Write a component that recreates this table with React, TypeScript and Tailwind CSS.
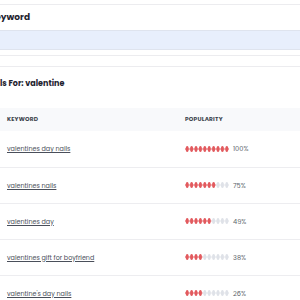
import React from "react";

type Row = { keyword: string; pct: number; fill: number };

const rows: Row[] = [
  { keyword: "valentines day nails", pct: 100, fill: 10 },
  { keyword: "valentines nails", pct: 75, fill: 7.5 },
  { keyword: "valentines day", pct: 49, fill: 6 },
  { keyword: "valentines gift for boyfriend", pct: 38, fill: 4 },
  { keyword: "valentine's day nails", pct: 26, fill: 4 },
];

// popularity meter: 10 little pips threaded on a line
const Meter = ({ fill }: { fill: number }) => {
  const step = 4.4;
  return (
    <svg width="45" height="8" viewBox="0 0 45 8">
      {Array.from({ length: 10 }).map((_, i) => {
        const cx = 2.2 + i * step;
        const on = i + 0.5 < fill;
        const c = on ? "#e25a5e" : "#dfe2e8";
        return (
          <g key={i}>
            <line x1={cx - 2.2} y1="4" x2={cx + 2.2} y2="4" stroke={c} strokeWidth="1" />
            <ellipse cx={cx} cy="4" rx="1.5" ry="3" fill={c} />
          </g>
        );
      })}
    </svg>
  );
};

export default function App() {
  return (
    <div
      className="w-[300px] h-[300px] overflow-hidden bg-white"
      style={{ fontFamily: "Poppins, Lato, 'Open Sans', sans-serif" }}
    >
      {/* keyword search card */}
      <div className="mt-[4px] border-t border-b border-[#ececef] pb-[5px]">
        <div className="h-[25px] flex items-center -ml-[11px] text-[9px] font-bold text-[#1f2430]">
          Keyword
        </div>
        <div className="h-[20px] bg-[#e8effc] border-t border-b border-[#dfe4ee]" />
      </div>

      {/* results card */}
      <div className="mt-[10px] border-t border-[#ececef]">
        <div className="h-[34px] flex items-center -ml-[60px] text-[8px] font-bold text-[#1f2430] whitespace-nowrap">
          Keyword Details For: valentine
        </div>
        <div className="mt-[7px] h-[23px] bg-[#f8f9fb] flex items-center text-[5.8px] font-bold text-[#3a3f4a] tracking-[0.2px]">
          <div className="w-[185px] pl-[7px]">KEYWORD</div>
          <div>POPULARITY</div>
        </div>
        {rows.map((r, i) => (
          <div
            key={r.keyword}
            className={`h-[36px] flex items-center ${i > 0 ? "border-t border-[#ededf0]" : ""}`}
          >
            <div className="w-[185px] pl-[7px] text-[6.4px] text-[#4a4f5a] underline underline-offset-1">
              {r.keyword}
            </div>
            <div className="flex items-center gap-[3px]">
              <Meter fill={r.fill} />
              <span className="text-[6.6px] text-[#5a5f6a]">{r.pct}%</span>
            </div>
          </div>
        ))}
      </div>
    </div>
  );
}
